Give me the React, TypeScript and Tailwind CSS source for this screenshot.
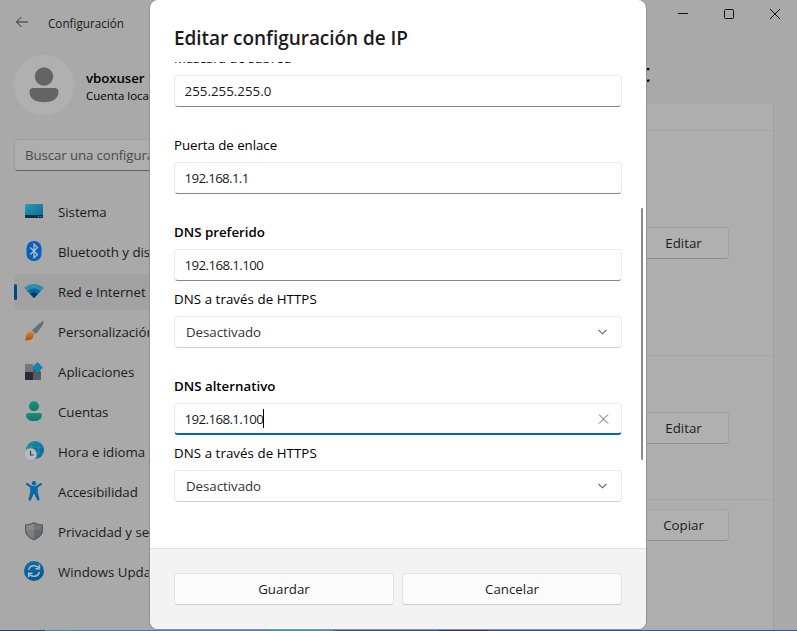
import type { ReactNode } from "react";

function SystemIcon() {
  return (
    <svg width="20" height="20" viewBox="0 0 20 20">
      <defs>
        <linearGradient id="sys" x1="0" y1="0" x2="1" y2="1">
          <stop offset="0" stopColor="#2a9dab" />
          <stop offset="1" stopColor="#09649b" />
        </linearGradient>
      </defs>
      <rect x="1" y="3" width="18" height="14" rx="1" fill="url(#sys)" />
      <path d="M1 14h18v2a1 1 0 0 1-1 1H2a1 1 0 0 1-1-1z" fill="#0a3049" />
      <path d="M14 15.5h1M16.5 15.5h1" stroke="#6fa0b5" />
    </svg>
  );
}

function BluetoothIcon() {
  return (
    <svg width="20" height="20" viewBox="0 0 20 20">
      <rect x="2.5" y="0" width="15" height="20" rx="7.2" fill="#0860bd" />
      <path d="M6.3 6.5l7.2 7L10 16.7V3.3l3.5 3.2-7.2 7" fill="none" stroke="#b4bfcb" strokeWidth="1.3" />
    </svg>
  );
}

function WifiIcon() {
  return (
    <svg width="20" height="20" viewBox="0 0 20 20">
      <path d="M0 6.8Q10-.9 20 6.8L10 17z" fill="#2c8fac" />
      <path d="M3.2 10Q10 4.4 16.8 10L10 17z" fill="#0c67a0" />
      <path d="M6.2 13Q10 9.6 13.8 13L10 17z" fill="#0b3768" />
    </svg>
  );
}

function BrushIcon() {
  return (
    <svg width="20" height="20" viewBox="0 0 20 20">
      <defs>
        <linearGradient id="handle" x1="0" y1="0" x2="1" y2="1">
          <stop offset="0" stopColor="#858c94" />
          <stop offset="1" stopColor="#4b535b" />
        </linearGradient>
        <linearGradient id="bristle" x1="0" y1="0" x2="0" y2="1">
          <stop offset="0" stopColor="#d48414" />
          <stop offset="1" stopColor="#b64b18" />
        </linearGradient>
      </defs>
      <path d="M18.2.4c1-.7 1.9.2 1.4 1.3-1.7 4-4.300 7.300-8 11.100L7.600 9.600C11 6 14.300 2.900 18.200.4z" fill="url(#handle)" />
      <path d="M7.800 9.500l3.600 3.200-1.500 1.600-3.700-3.300z" fill="#9a9fa3" />
      <path d="M6.400 11c2 .1 3.500 1.700 3.300 3.700C9.300 18.500 4.500 20 .4 18.900c1.600-.8 1.400-2.100 1.700-4C2.500 12.500 4.300 10.900 6.400 11z" fill="url(#bristle)" />
    </svg>
  );
}

function AppsIcon() {
  return (
    <svg width="20" height="20" viewBox="0 0 20 20">
      <path d="M1 3h8v8H1z" fill="#737981" />
      <path d="M1 11h8v8H1z" fill="#2b2e31" />
      <path d="M9 11h8v7a1 1 0 0 1-1 1H9z" fill="#555c64" />
      <path d="M9 8h5l3 3v1H9z" fill="#505860" />
      <rect x="9.700" y="2.700" width="7.600" height="7.600" rx=".6" transform="rotate(45 13.500 6.500)" fill="#157fb8" />
    </svg>
  );
}

function AccountIcon() {
  return (
    <svg width="20" height="20" viewBox="0 0 20 20">
      <defs>
        <linearGradient id="acc" x1="0" y1="0" x2="0" y2="1">
          <stop offset="0" stopColor="#19917a" />
          <stop offset="1" stopColor="#12766b" />
        </linearGradient>
      </defs>
      <circle cx="10" cy="5.200" r="5" fill="url(#acc)" />
      <path d="M4 12h12a2 2 0 0 1 2 2c0 4-3.500 6-8 6s-8-2-8-6a2 2 0 0 1 2-2z" fill="url(#acc)" />
    </svg>
  );
}

function TimeIcon() {
  return (
    <svg width="20" height="20" viewBox="0 0 20 20">
      <defs>
        <linearGradient id="globe" x1="0" y1="0" x2="1" y2="1">
          <stop offset="0" stopColor="#1596a0" />
          <stop offset="1" stopColor="#075c9e" />
        </linearGradient>
      </defs>
      <circle cx="11" cy="9" r="9" fill="url(#globe)" />
      <g fill="none" stroke="#2f8fb2" strokeWidth=".8">
        <ellipse cx="11" cy="9" rx="4" ry="9" />
        <path d="M3 6h16M3 12h16" />
      </g>
      <circle cx="6.500" cy="13.500" r="6.300" fill="#b8bcbf" stroke="#8d9295" strokeWidth=".5" />
      <path d="M6.500 9.800v4.200H9.800" fill="none" stroke="#363c40" strokeWidth="1.200" />
    </svg>
  );
}

function AccessIcon() {
  return (
    <svg width="20" height="20" viewBox="0 0 20 20">
      <circle cx="10" cy="2.300" r="2.200" fill="#0b68a6" />
      <path
        d="M3.400 2.100C5.500 3 6.700 5.200 10 5.200S14.500 3 16.600 2.100c1.300-.5 2.100 1.200.9 1.900L13.800 6.600v4.800l1.700 6.700c.3 1.500-1.900 2.200-2.500.7L10.300 13h-.6L7 18.800c-.6 1.500-2.800.8-2.500-.7l1.700-6.700V6.600L2.500 4c-1.200-.7-.4-2.400.9-1.900z"
        fill="#0b68a6"
      />
    </svg>
  );
}

function ShieldIcon() {
  return (
    <svg width="20" height="20" viewBox="0 0 20 20">
      <path d="M10 1c2.500 1.700 5.500 2.300 9 2.400V9c0 5-4 8.500-9 10.200C5 17.500 1 14 1 9V3.400C4.500 3.300 7.500 2.700 10 1z" fill="#555a5e" />
      <path d="M10 2.300v7.500H2.200V4.400c3-.1 5.500-.7 7.800-2.100z" fill="#858a8d" />
      <path d="M10 2.300c2.300 1.400 4.800 2 7.800 2.100v5.400H10z" fill="#707579" />
      <path d="M2.200 9.800H10V18c-4.300-1.600-7.500-4.300-7.800-8.200z" fill="#7a7f82" />
      <path d="M10 9.800h7.800c-.3 3.900-3.500 6.600-7.800 8.200z" fill="#63686c" />
    </svg>
  );
}

function UpdateIcon() {
  return (
    <svg width="20" height="20" viewBox="0 0 20 20">
      <defs>
        <linearGradient id="upd" x1="0" y1="0" x2="0" y2="1">
          <stop offset="0" stopColor="#0c70a7" />
          <stop offset="1" stopColor="#075491" />
        </linearGradient>
      </defs>
      <circle cx="10" cy="10" r="10" fill="url(#upd)" />
      <g fill="none" stroke="#a8bac5" strokeWidth="1.500">
        <path d="M4.600 9C5.600 4.200 11.800 3.200 15 7M15.400 3.800v4h-4" />
        <path d="M15.400 11c-1 4.800-7.200 5.800-10.400 2M4.600 16.200v-4h4" />
      </g>
    </svg>
  );
}

const navItems: { label: string; icon: ReactNode; active?: boolean }[] = [
  { label: "Sistema", icon: <SystemIcon /> },
  { label: "Bluetooth y dispositivos", icon: <BluetoothIcon /> },
  { label: "Red e Internet", icon: <WifiIcon />, active: true },
  { label: "Personalización", icon: <BrushIcon /> },
  { label: "Aplicaciones", icon: <AppsIcon /> },
  { label: "Cuentas", icon: <AccountIcon /> },
  { label: "Hora e idioma", icon: <TimeIcon /> },
  { label: "Accesibilidad", icon: <AccessIcon /> },
  { label: "Privacidad y seguridad", icon: <ShieldIcon /> },
  { label: "Windows Update", icon: <UpdateIcon /> },
];

function Sidebar() {
  return (
    <aside className="w-[160px] shrink-0 overflow-hidden pl-3.5">
      <div className="mt-[9px] flex h-[60px] items-center">
        <div className="flex size-[60px] shrink-0 items-center justify-center rounded-full bg-[#b0b0b0]">
          <svg width="30" height="36" viewBox="0 0 30 36" fill="#646464">
            <circle cx="15" cy="9.500" r="9.200" />
            <path d="M4.500 21h21a4 4 0 0 1 4 4c0 6.500-5.500 10.200-14.500 10.200S.5 31.500.5 25a4 4 0 0 1 4-4z" />
          </svg>
        </div>
        <div className="mt-1 ml-3 whitespace-nowrap text-black">
          <div className="text-[13.3px] leading-[18px] font-semibold tracking-[-0.1px]">vboxuser</div>
          <div className="text-[11.5px] leading-[18px]">Cuenta local</div>
        </div>
      </div>
      <div className="mt-6 flex h-8 w-[300px] items-center rounded border border-[#9f9f9f] border-b-[#616161] bg-[#aeaeae] pl-2.5 tracking-[-0.12px] whitespace-nowrap text-[#4b4b4b]">
        Buscar una configuración
      </div>
      <nav className="mt-[23px] flex flex-col gap-1">
        {navItems.map((item) => (
          <div
            key={item.label}
            className={`flex h-9 w-[300px] items-center rounded whitespace-nowrap ${item.active ? "bg-[#a2a2a2]" : ""}`}
          >
            <span className={`h-4 w-[3px] rounded-full ${item.active ? "bg-[#00478c]" : ""}`} />
            <span className="ml-[7px] pb-0.5">{item.icon}</span>
            <span className="ml-3.5 tracking-[-0.03px]">{item.label}</span>
          </div>
        ))}
      </nav>
    </aside>
  );
}

function CardRow({ height, pad, label }: { height: string; pad: string; label?: string }) {
  return (
    <div className={`flex items-start justify-end border-b border-[#a6a6a6] pr-11 ${height} ${pad}`}>
      {label && (
        <div className="flex h-8 w-[91px] items-center justify-center rounded border border-[#a0a0a0] border-b-[#8d8d8d] bg-[#b0b0b0]">
          {label}
        </div>
      )}
    </div>
  );
}

function MainPane() {
  return (
    <main className="flex flex-1 flex-col pr-[23px]">
      <h1 className="mt-[6px] mr-[124px] text-right text-[26px] leading-[40px] font-semibold text-black">Ethernet</h1>
      <div className="mt-[12px] flex-1 overflow-hidden border-r border-[#9f9f9f] bg-[#aeaeae]">
        <CardRow height="h-[27px]" pad="pt-0" />
        <CardRow height="h-[225px]" pad="pt-24" label="Editar" />
        <CardRow height="h-[144px]" pad="pt-14" label="Editar" />
        <CardRow height="h-[140px]" pad="pt-[9px]" label="Copiar" />
      </div>
    </main>
  );
}

function TitleBar() {
  return (
    <header className="flex h-[46px] items-center justify-between pr-[17px] pl-[15px]">
      <div className="flex items-center">
        <svg width="14" height="12" viewBox="0 0 14 12" fill="none" stroke="#303030" className="-mt-0.5">
          <path d="M13 6H1.500M6.500 1l-5 5 5 5" />
        </svg>
        <span className="ml-[19px] text-[11.700px] leading-[18px] text-[#191919]">Configuración</span>
      </div>
      <div className="mb-[18px] flex items-center gap-9 text-[#111]">
        <svg width="10" height="10" viewBox="0 0 10 10" stroke="currentColor"><path d="M0 4.500h10" /></svg>
        <svg width="10" height="10" viewBox="0 0 10 10" fill="none" stroke="currentColor"><rect x=".5" y=".5" width="9" height="9" rx="1" /></svg>
        <svg width="10" height="10" viewBox="0 0 10 10" stroke="currentColor"><path d="M0 0l10 10M10 0L0 10" /></svg>
      </div>
    </header>
  );
}

function TextField({ value, tracking, focused }: { value: string; tracking: string; focused?: boolean }) {
  return (
    <div
      className={`flex h-8 items-center rounded border border-[#ebebeb] pr-3 pl-[9.5px] ${
        focused ? "border-b-2 border-b-[#0067c0]" : "border-b-[#868686]"
      }`}
    >
      <span className={tracking}>{value}</span>
      {focused && <span className="h-[19px] w-px bg-black" />}
      {focused && (
        <svg className="ml-auto" width="11" height="10" viewBox="0 0 11 10" stroke="#686868">
          <path d="M1 .5l9 9M10 .5l-9 9" />
        </svg>
      )}
    </div>
  );
}

function SelectField() {
  return (
    <div className="flex h-8 items-center justify-between rounded border border-[#ebebeb] border-b-[#d2d2d2] pr-[14.5px] pl-[11px] text-[#333]">
      <span className="tracking-[-0.04px]">Desactivado</span>
      <svg width="9" height="6" viewBox="0 0 9 6" fill="none" stroke="#606060" strokeWidth="1.150"><path d="M.5.8l4 4 4-4" /></svg>
    </div>
  );
}

function Label({ children, className }: { children: ReactNode; className: string }) {
  return <div className={`mb-[7px] h-5 leading-5 text-black ${className}`}>{children}</div>;
}

function IpDialog() {
  return (
    <div className="absolute top-0 left-[150px] flex h-[629px] w-[496px] flex-col overflow-hidden rounded-lg bg-white shadow-[0_0_0_1px_#929292]">
      <h2 className="h-[62px] shrink-0 pt-6 pl-6 text-[19px] leading-7 font-semibold tracking-[-0.04px]">Editar configuración de IP</h2>
      <div className="flex h-[486px] shrink-0 justify-between overflow-hidden pl-6">
        <div className="w-[448px]">
          <Label className="-mt-[14px] tracking-[-0.05px]">Máscara de subred</Label>
          <TextField value="255.255.255.0" tracking="tracking-[0.03px]" />
          <Label className="mt-7 tracking-[-0.05px]">Puerta de enlace</Label>
          <TextField value="192.168.1.1" tracking="tracking-[-0.65px]" />
          <Label className="mt-7 font-semibold">DNS preferido</Label>
          <TextField value="192.168.1.100" tracking="tracking-[-0.6px]" />
          <Label className="mt-2 tracking-[0.06px]">DNS a través de HTTPS</Label>
          <SelectField />
          <Label className="mt-7 font-semibold">DNS alternativo</Label>
          <TextField value="192.168.1.100" tracking="tracking-[-0.6px]" focused />
          <Label className="mt-2 tracking-[0.06px]">DNS a través de HTTPS</Label>
          <SelectField />
        </div>
        <div className="mt-[146px] mr-[3px] h-[252px] w-0.5 rounded-full bg-[#8a8a8a]" />
      </div>
      <div className="flex flex-1 items-start gap-2 border-t border-[#e0e0e0] bg-[#f3f3f3] px-6 pt-6">
        <button className="h-8 flex-1 rounded border border-[#e3e3e3] border-b-[#cbcbcb] bg-[#fbfbfb]">Guardar</button>
        <button className="h-8 flex-1 rounded border border-[#e3e3e3] border-b-[#cbcbcb] bg-[#fbfbfb]">Cancelar</button>
      </div>
    </div>
  );
}

export default function App() {
  return (
    <div className="relative flex h-[631px] w-[797px] flex-col overflow-hidden bg-[#a9a9a9] font-['Open_Sans','Noto_Sans',sans-serif] text-[13.3px] leading-5 text-[#1b1b1b]">
      <TitleBar />
      <div className="flex min-h-0 flex-1">
        <Sidebar />
        <MainPane />
      </div>
      <div className="flex h-px shrink-0">
        <div className="w-[45px] bg-[#2c3a78]" />
        <div className="w-[25px] bg-[#2f94a0]" />
        <div className="w-[197px] bg-[#2f86b4]" />
        <div className="w-[66px] bg-[#2b9aa8]" />
        <div className="w-[105px] bg-[#3352a8]" />
        <div className="w-[50px] bg-[#33386c]" />
        <div className="flex-1 bg-[#2f559c]" />
      </div>
      <IpDialog />
    </div>
  );
}
